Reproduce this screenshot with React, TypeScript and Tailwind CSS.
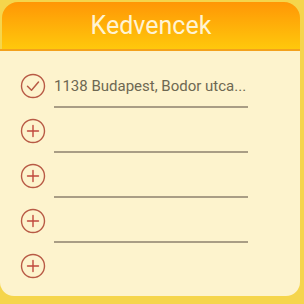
import React from 'react';

function CheckIcon() {
  return (
    <svg width="26" height="26" viewBox="0 0 26 26" fill="none" aria-hidden="true">
      <circle cx="13" cy="13" r="11.5" stroke="#b85a45" strokeWidth="1.4" />
      <path d="M7.5 13.2 L11.5 17.2 L18.5 9" stroke="#b85a45" strokeWidth="1.5" strokeLinecap="round" strokeLinejoin="round" />
    </svg>
  );
}

function PlusIcon() {
  return (
    <svg width="26" height="26" viewBox="0 0 26 26" fill="none" aria-hidden="true">
      <circle cx="13" cy="13" r="11.5" stroke="#b85a45" strokeWidth="1.4" />
      <path d="M13 7.5 V18.5 M7.5 13 H18.5" stroke="#c0483c" strokeWidth="1.4" strokeLinecap="round" />
    </svg>
  );
}

const rows = ['1138 Budapest, Bodor utca...', '', '', '', ''];

export default function App() {
  return (
    <div className="w-[304px] h-[304px] bg-[#f5d54c] overflow-hidden font-['Roboto',sans-serif]">
      <div className="w-[300px] h-[296px] flex flex-col">
        <div className="ml-[2px] mt-[2px] h-[47px] rounded-t-[16px] bg-gradient-to-b from-[#ff9606] to-[#ffc80c] flex items-center justify-center">
          <span className="text-[25px] leading-none text-[#fff4d4] pb-[1px]">Kedvencek</span>
        </div>
        <div className="h-[2px] bg-[#f3a11d]" />
        <div className="flex-1 bg-[#fdf3cd] rounded-b-[14px] pt-[22px] pl-[20px] flex flex-col gap-[10px]">
          {rows.map((text, i) => (
            <div key={i} className="flex items-start gap-[8px]">
              {i === 0 ? <CheckIcon /> : <PlusIcon />}
              <div
                className={
                  i < 4
                    ? 'w-[194px] h-[35px] border-b-2 border-[#a99d85] text-[15px] leading-[26px] text-[#6e6852] whitespace-nowrap'
                    : 'w-[194px] h-[35px]'
                }
              >
                {text}
              </div>
            </div>
          ))}
        </div>
      </div>
    </div>
  );
}
